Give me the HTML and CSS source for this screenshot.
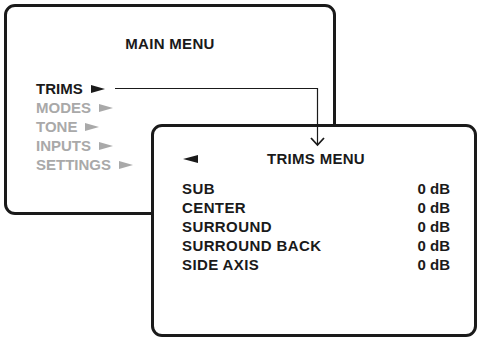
FILE: index.html
```html
<!DOCTYPE html>
<html>
<head>
    <meta charset="UTF-8">
    <title>Trims menu</title>
    <link rel="stylesheet" href="styles.css">
</head>
<body>
    <div class="stage">
        <div class="screen main-screen">
            <h1 class="screen-title">MAIN MENU</h1>
            <ul class="main-list">
                <li class="item active">TRIMS</li>
                <li class="item">MODES</li>
                <li class="item">TONE</li>
                <li class="item">INPUTS</li>
                <li class="item">SETTINGS</li>
            </ul>
        </div>

        <div class="screen trims-screen">
            <div class="trims-head">
                <span class="back"></span>
                <h2 class="screen-title">TRIMS MENU</h2>
                <span></span>
            </div>
            <ul class="trims-list">
                <li><span>SUB</span><span>0 dB</span></li>
                <li><span>CENTER</span><span>0 dB</span></li>
                <li><span>SURROUND</span><span>0 dB</span></li>
                <li><span>SURROUND BACK</span><span>0 dB</span></li>
                <li><span>SIDE AXIS</span><span>0 dB</span></li>
            </ul>
        </div>

        <!-- connector from TRIMS to the submenu -->
        <svg class="connector" width="478" height="339" viewBox="0 0 478 339">
            <path d="M115 88.5 H317.5 V145" fill="none" stroke="#1a1a1a" stroke-width="1.2"/>
            <path d="M311 138 L317.5 145 L324 138" fill="none" stroke="#1a1a1a" stroke-width="1.8"/>
        </svg>
    </div>
</body>
</html>
```

FILE: styles.css
```css
html, body {
    margin: 0;
    padding: 0;
    background: #ffffff;
}
.stage {
    position: relative;
    width: 478px;
    height: 339px;
    overflow: hidden;
    font-family: "Liberation Sans", Arial, sans-serif;
    font-weight: bold;
    font-size: 15px;
    line-height: 19px;
    color: #1a1a1a;
}
.screen {
    position: absolute;
    box-sizing: border-box;
    border: 3px solid #1a1a1a;
    border-radius: 11px;
    background: #ffffff;
}
.main-screen {
    left: 4px;
    top: 4px;
    width: 332px;
    height: 211px;
    padding: 27px 0 0 29px;
}
.trims-screen {
    left: 151px;
    top: 124px;
    width: 326px;
    height: 213px;
    padding: 22px 24px 0 28px;
}
.screen-title {
    margin: 0;
    font-size: 15px;
    font-weight: bold;
    letter-spacing: 0.3px;
    text-align: center;
}
.main-screen .screen-title {
    margin-left: -29px;
}
ul {
    list-style: none;
    margin: 0;
    padding: 0;
}
.main-list {
    margin-top: 26px;
}
.item {
    display: flex;
    align-items: center;
    color: #a9a9a9;
}
.item.active {
    color: #1a1a1a;
}
.item::after {
    content: "";
    width: 0;
    height: 0;
    margin-left: 8px;
    border-left: 14px solid currentColor;
    border-top: 4px solid transparent;
    border-bottom: 4px solid transparent;
}
.trims-head {
    display: grid;
    grid-template-columns: 1fr auto 1fr;
    align-items: center;
}
.back {
    width: 0;
    height: 0;
    margin-left: 1px;
    border-right: 15px solid #1a1a1a;
    border-top: 4px solid transparent;
    border-bottom: 4px solid transparent;
}
.trims-list {
    margin-top: 11px;
    letter-spacing: 0.4px;
}
.trims-list li {
    display: flex;
    justify-content: space-between;
}
.trims-list li span:last-child {
    letter-spacing: 0;
}
.connector {
    position: absolute;
    left: 0;
    top: 0;
}
```
